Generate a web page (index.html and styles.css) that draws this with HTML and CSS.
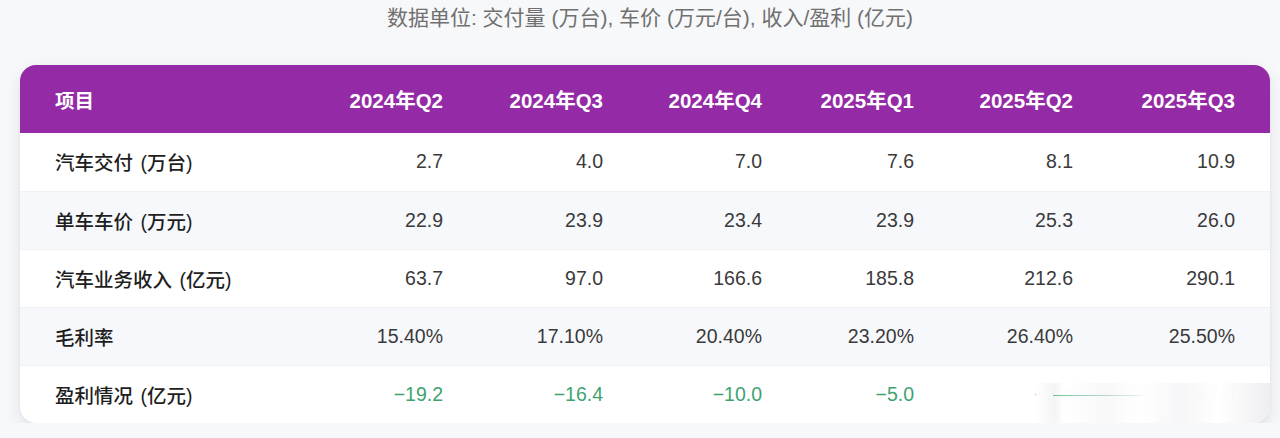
FILE: index.html
```html
<!DOCTYPE html>
<html lang="zh-CN">
<head>
<meta charset="utf-8">
<title>数据表</title>
<link rel="stylesheet" href="styles.css">
</head>
<body>
<div class="page">
  <p class="caption">数据单位: 交付量 (万台), 车价 (万元/台), 收入/盈利 (亿元)</p>
  <div class="card">
    <table class="data">
      <colgroup>
        <col class="c-label"><col class="c-q1"><col class="c-q2"><col class="c-q3"><col class="c-q4"><col class="c-q5"><col class="c-q6">
      </colgroup>
      <thead>
        <tr>
          <th class="label">项目</th>
          <th>2024年Q2</th>
          <th>2024年Q3</th>
          <th>2024年Q4</th>
          <th>2025年Q1</th>
          <th>2025年Q2</th>
          <th>2025年Q3</th>
        </tr>
      </thead>
      <tbody>
        <tr>
          <td class="label">汽车交付 (万台)</td>
          <td>2.7</td><td>4.0</td><td>7.0</td><td>7.6</td><td>8.1</td><td>10.9</td>
        </tr>
        <tr class="alt">
          <td class="label">单车车价 (万元)</td>
          <td>22.9</td><td>23.9</td><td>23.4</td><td>23.9</td><td>25.3</td><td>26.0</td>
        </tr>
        <tr>
          <td class="label">汽车业务收入 (亿元)</td>
          <td>63.7</td><td>97.0</td><td>166.6</td><td>185.8</td><td>212.6</td><td>290.1</td>
        </tr>
        <tr class="alt">
          <td class="label">毛利率</td>
          <td>15.40%</td><td>17.10%</td><td>20.40%</td><td>23.20%</td><td>26.40%</td><td>25.50%</td>
        </tr>
        <tr class="last">
          <td class="label">盈利情况 (亿元)</td>
          <td class="neg">−19.2</td><td class="neg">−16.4</td><td class="neg">−10.0</td><td class="neg">−5.0</td><td class="neg">−3.0</td><td class="pos">+7.0</td>
        </tr>
      </tbody>
    </table>
    <div class="watermark" aria-hidden="true"><span class="wm-line"></span></div>
  </div>
</div>
</body>
</html>
```

FILE: styles.css
```css
html, body {
  margin: 0;
  padding: 0;
  background: #f7f8fa;
}

body {
  font-family: "Liberation Sans", "Noto Sans CJK SC", sans-serif;
  color: #333;
}

.page {
  padding: 0 10px 0 20px;
}

.caption {
  margin: 0;
  height: 36px;
  line-height: 36px;
  text-align: center;
  font-size: 21px;
  color: #707070;
  padding-left: 10px;
}

.card {
  position: relative;
  margin-top: 29px;
  width: 1250px;
  background: #fff;
  border-radius: 16px;
  overflow: hidden;
  box-shadow: 0 6px 18px rgba(20, 20, 40, 0.09), 0 1px 3px rgba(20, 20, 40, 0.05);
}

.data {
  width: 100%;
  border-collapse: collapse;
  table-layout: fixed;
}

.c-label { width: 298px; }
.c-q1 { width: 160px; }
.c-q2 { width: 160px; }
.c-q3 { width: 159px; }
.c-q4 { width: 152px; }
.c-q5 { width: 159px; }
.c-q6 { width: 162px; }

.data thead tr {
  background: #952aa6;
}

.data th {
  height: 68px;
  padding: 0 35px 0 0;
  text-align: right;
  color: #fff;
  font-size: 20.5px;
  font-weight: 700;
  box-sizing: border-box;
}

.data th.label,
.data td.label {
  text-align: left;
  padding-left: 35px;
}

.data th.label {
  font-size: 19.5px;
}

.data td {
  height: 58px;
  padding: 0 35px 0 0;
  text-align: right;
  font-size: 19.5px;
  color: #3a3a3a;
  border-bottom: 1px solid #eff1f5;
  box-sizing: border-box;
}

.data tr.last td {
  border-bottom: none;
}

.data td.label {
  font-size: 19.5px;
  font-weight: 500;
  color: #1e1e1e;
  word-spacing: 2px;
}

.data tr.alt td {
  background: #f7f8fc;
}

.data td.neg {
  color: #3ea36f;
}

.data td.pos {
  color: #d64545;
}

.watermark {
  position: absolute;
  left: 1016px;
  top: 318px;
  width: 234px;
  height: 42px;
  background:
    linear-gradient(90deg,
      rgba(255,255,255,0.97) 0%,
      rgba(244,244,246,0.98) 8%,
      rgba(255,255,255,0.98) 12%,
      rgba(248,248,250,0.98) 30%,
      rgba(255,255,255,0.98) 45%,
      rgba(246,246,248,0.98) 62%,
      rgba(255,255,255,0.98) 78%,
      rgba(244,244,246,0.98) 92%,
      rgba(238,238,240,0.98) 100%);
}

.wm-line {
  position: absolute;
  left: 17px;
  top: 12px;
  width: 90px;
  height: 1px;
  background: linear-gradient(90deg, rgba(62,163,111,0.7), rgba(62,163,111,0.12));
}
```
